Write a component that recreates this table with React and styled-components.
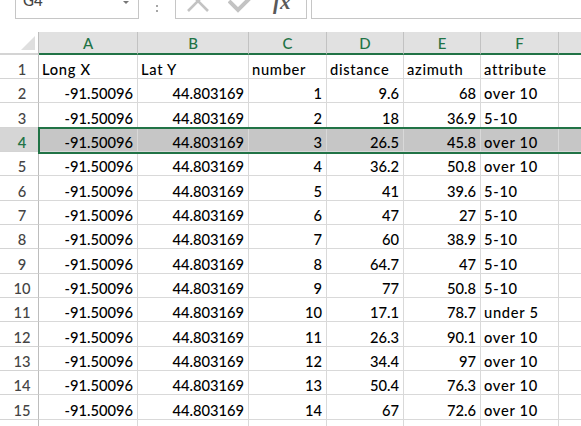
import React from 'react';
import styled, { createGlobalStyle, css } from 'styled-components';

const GREEN = '#217346';
const GRID = '#d9d9d9';

const Global = createGlobalStyle`
  html, body { margin: 0; padding: 0; background: #ffffff; }
  body { font-family: Lato, 'Open Sans', sans-serif; }
`;

const Window = styled.div`
  width: 581px;
  height: 426px;
  overflow: hidden;
  background: #ffffff;
  display: flex;
  flex-direction: column;
`;

const FormulaBar = styled.div`
  flex: none;
  height: 19px;
  display: flex;
  align-items: flex-end;
  padding-left: 15px;
  overflow: hidden;
`;

const Box = styled.div`
  flex: none;
  box-sizing: border-box;
  height: 30px;
  border: 1px solid #c6c6c6;
  background: #ffffff;
  display: flex;
  align-items: flex-end;
`;

const NameBox = styled(Box)`
  width: 124px;
  justify-content: space-between;
  padding: 0 9px 10px 7px;
  font-size: 15px;
  line-height: 15px;
  font-weight: 500;
  color: #444444;
`;

const DropArrow = styled.span`
  width: 0;
  height: 0;
  margin-bottom: 4px;
  border-left: 3px solid transparent;
  border-right: 3px solid transparent;
  border-top: 3px solid #777777;
`;

const Grip = styled.div`
  flex: none;
  width: 36px;
  height: 19px;
  display: flex;
  flex-direction: column;
  align-items: center;
  justify-content: flex-end;
  gap: 3px;
  padding-bottom: 7px;
  box-sizing: border-box;
`;

const Dot = styled.span`
  width: 2px;
  height: 2px;
  background: #a6a6a6;
`;

const FxBox = styled(Box)`
  width: 132px;
  padding: 0 0 4px 11px;
`;

const IconSlot = styled.span`
  display: flex;
  margin-right: ${(p) => p.$gap}px;
  margin-bottom: ${(p) => p.$lift}px;
`;

const Fx = styled.span`
  font-family: 'Liberation Serif', 'DejaVu Serif', serif;
  font-style: italic;
  font-weight: bold;
  font-size: 21px;
  line-height: 21px;
  color: #595959;
  margin-bottom: 1px;
`;

const FormulaInput = styled(Box)`
  flex: 1;
  margin-left: 4px;
  margin-right: -2px;
`;

const Spacer = styled.div`
  flex: none;
  height: 13px;
`;

const Sheet = styled.div`
  flex: none;
  display: flex;
  flex-direction: column;
`;

const Row = styled.div`
  display: flex;
  flex: none;
  height: ${(p) => p.$h}px;
  ${(p) =>
    p.$selected &&
    css`
      position: relative;
      z-index: 1;
      &::after {
        content: '';
        position: absolute;
        left: 38px;
        right: -4px;
        top: -1px;
        bottom: -2px;
        border: 2px solid ${GREEN};
        pointer-events: none;
      }
    `}
`;

const Corner = styled.div`
  flex: none;
  width: 39px;
  box-sizing: border-box;
  border-right: 1px solid #bdbdbd;
  border-bottom: 2px solid #d4d4d4;
  background: #ffffff;
  display: flex;
  align-items: flex-end;
  justify-content: flex-end;
  padding: 0 3px 3px 0;
`;

const CornerTriangle = styled.span`
  width: 0;
  height: 0;
  border-left: 14px solid transparent;
  border-bottom: 14px solid #dfdfdf;
`;

const ColHeader = styled.div`
  flex: none;
  width: ${(p) => p.$w}px;
  box-sizing: border-box;
  background: #e1e1e1;
  border-right: 1px solid #c2c2c2;
  border-bottom: 2px solid ${GREEN};
  color: ${GREEN};
  font-size: 15px;
  font-weight: 500;
  line-height: 15px;
  display: flex;
  align-items: center;
  justify-content: center;
  padding-top: 1px;
`;

const RowHeader = styled.div`
  flex: none;
  width: 39px;
  box-sizing: border-box;
  border-right: 1px solid #bdbdbd;
  border-bottom: 1px solid #d4d4d4;
  background: ${(p) => (p.$selected ? '#d6d6d6' : '#ffffff')};
  color: ${(p) => (p.$selected ? GREEN : '#444444')};
  font-size: 14.7px;
  font-weight: ${(p) => (p.$selected ? 600 : 500)};
  line-height: 17px;
  display: flex;
  align-items: flex-end;
  justify-content: center;
  padding-left: 6px;
`;

const Cell = styled.div`
  flex: none;
  width: ${(p) => p.$w}px;
  box-sizing: border-box;
  border-right: 1px solid ${GRID};
  border-bottom: 1px solid ${GRID};
  background: ${(p) => (p.$selected ? '#c6c6c6' : '#ffffff')};
  color: #000000;
  font-size: 14.7px;
  font-weight: 500;
  line-height: 17px;
  letter-spacing: ${(p) => (p.$num ? 0 : 0.7)}px;
  white-space: nowrap;
  display: flex;
  align-items: flex-end;
  justify-content: ${(p) => (p.$num ? 'flex-end' : 'flex-start')};
  padding: 0 4px 0 3px;
`;

const COLS = [
  { id: 'A', w: 99 },
  { id: 'B', w: 111 },
  { id: 'C', w: 78 },
  { id: 'D', w: 77 },
  { id: 'E', w: 77 },
  { id: 'F', w: 78 },
  { id: 'G', w: 60 },
];

const X = '-91.50096';
const Y = '44.803169';

const DATA = [
  ['Long X', 'Lat Y', 'number', 'distance', 'azimuth', 'attribute'],
  [X, Y, 1, 9.6, 68, 'over 10'],
  [X, Y, 2, 18, 36.9, '5-10'],
  [X, Y, 3, 26.5, 45.8, 'over 10'],
  [X, Y, 4, 36.2, 50.8, 'over 10'],
  [X, Y, 5, 41, 39.6, '5-10'],
  [X, Y, 6, 47, 27, '5-10'],
  [X, Y, 7, 60, 38.9, '5-10'],
  [X, Y, 8, 64.7, 47, '5-10'],
  [X, Y, 9, 77, 50.8, '5-10'],
  [X, Y, 10, 17.1, 78.7, 'under 5'],
  [X, Y, 11, 26.3, 90.1, 'over 10'],
  [X, Y, 12, 34.4, 97, 'over 10'],
  [X, Y, 13, 50.4, 76.3, 'over 10'],
  [X, Y, 14, 67, 72.6, 'over 10'],
  ['', '', '', '', '', ''],
];

const SELECTED_ROW = 4;
const HEIGHTS = [24, 24, 25];

const isNum = (v) => typeof v === 'number' || /^-?\d+(\.\d+)?$/.test(String(v));

const CancelIcon = () => (
  <svg width="22" height="22" viewBox="0 0 22 22">
    <path d="M1 1 L21 21 M21 1 L1 21" stroke="#c3c3c3" strokeWidth="2.6" fill="none" />
  </svg>
);

const CheckIcon = () => (
  <svg width="26" height="18" viewBox="0 0 26 18">
    <path d="M1 6 L10 15 L25 0" stroke="#c3c3c3" strokeWidth="4" fill="none" />
  </svg>
);

export default function App() {
  return (
    <Window>
      <Global />
      <FormulaBar>
        <NameBox>
          <span>G4</span>
          <DropArrow />
        </NameBox>
        <Grip>
          <Dot />
          <Dot />
        </Grip>
        <FxBox>
          <IconSlot $gap={19} $lift={2}>
            <CancelIcon />
          </IconSlot>
          <IconSlot $gap={19} $lift={1}>
            <CheckIcon />
          </IconSlot>
          <Fx>fx</Fx>
        </FxBox>
        <FormulaInput />
      </FormulaBar>
      <Spacer />
      <Sheet>
        <Row $h={23}>
          <Corner>
            <CornerTriangle />
          </Corner>
          {COLS.map((c) => (
            <ColHeader key={c.id} $w={c.w}>
              {c.id}
            </ColHeader>
          ))}
        </Row>
        {DATA.map((row, i) => {
          const n = i + 1;
          const sel = n === SELECTED_ROW;
          return (
            <Row key={n} $h={HEIGHTS[i % 3]} $selected={sel}>
              <RowHeader $selected={sel}>{n}</RowHeader>
              {COLS.map((c, j) => {
                const v = j < row.length ? row[j] : '';
                return (
                  <Cell key={c.id} $w={c.w} $selected={sel} $num={i > 0 && isNum(v)}>
                    {v}
                  </Cell>
                );
              })}
            </Row>
          );
        })}
      </Sheet>
    </Window>
  );
}
